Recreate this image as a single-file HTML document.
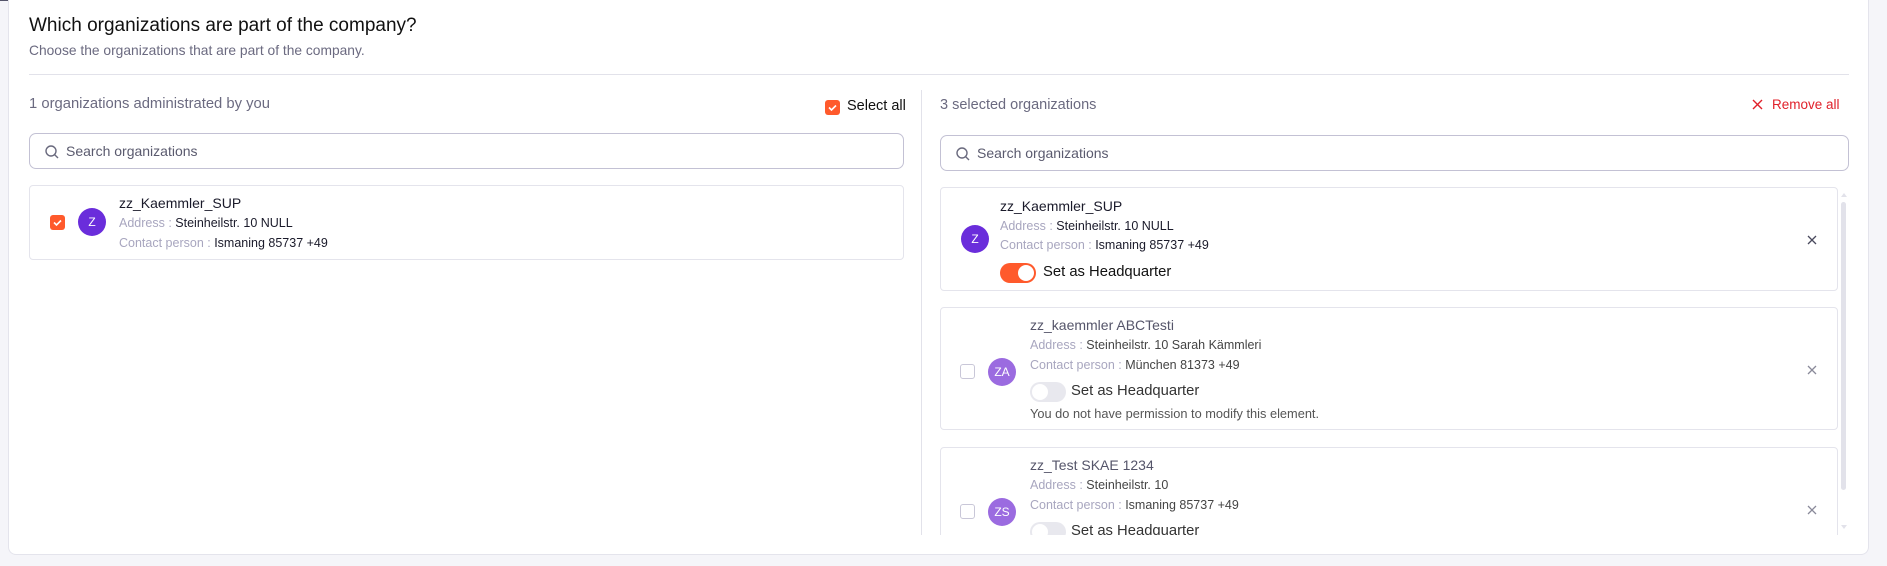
<!DOCTYPE html>
<html><head><meta charset="utf-8"><style>
*{box-sizing:border-box;margin:0;padding:0}
body{width:1887px;height:566px;background:#f5f5f9;font-family:"Liberation Sans",sans-serif;position:relative;overflow:hidden;color:#1a1a2a}
.a{position:absolute;white-space:nowrap}
.card{position:absolute;left:8px;top:0;width:1861px;height:555px;background:#fff;border:1px solid #e4e4ec;border-top:none;border-radius:0 0 8px 8px}
.search{position:absolute;border:1px solid #c3c1d4;border-radius:7px;height:36px}
.search span{position:absolute;left:36px;top:9px;font-size:14px;color:#5a5a6e}
.search svg{position:absolute;left:14px;top:10px}
.item{position:absolute;border:1px solid #e4e4ec;border-radius:4px;background:#fff}
.av{position:absolute;width:28px;height:28px;border-radius:50%;color:#fff;font-size:12px;text-align:center;line-height:28px}
.nm{font-size:14px;line-height:16px}
.ln{line-height:15px}
.lb{font-size:12.5px;color:#a8a6bf}
.vl{font-size:12.5px;color:#1a1a2a}
.cb{position:absolute;width:15px;height:15px;border-radius:3px}
.cbon{background:#ff5a2c}
.cboff{border:1px solid #c9c7d8;background:#fff}
.tg{position:absolute;width:36px;height:20px;border-radius:10px}
.tg i{position:absolute;top:2px;width:16px;height:16px;border-radius:50%;background:#fff}
.hq{font-size:14.8px;line-height:17px}
</style></head><body>
<div class="a" style="left:0;top:0;width:100px;height:1px;background:#55556a"></div>
<div class="card"></div>
<div class="a" style="left:29px;top:15px;font-size:19px;color:#111">Which organizations are part of the company?</div>
<div class="a" style="left:29px;top:43px;font-size:13.8px;color:#6b6a80">Choose the organizations that are part of the company.</div>
<div class="a" style="left:29px;top:74px;width:1820px;height:1px;background:#e2e2ea"></div>

<div class="a" style="left:29px;top:96px;font-size:14.8px;color:#6b6a80">1 organizations administrated by you</div>
<div class="cb cbon" style="left:825px;top:100px"><svg width="15" height="15"><path d="M4 7.5l2.5 2.5 4.5-4.5" stroke="#fff" stroke-width="1.6" fill="none"/></svg></div>
<div class="a" style="left:847px;top:98px;font-size:14.5px;color:#111">Select all</div>
<div class="search" style="left:29px;top:133px;width:875px"><svg width="16" height="16"><circle cx="7" cy="7" r="5" stroke="#6a6a7e" stroke-width="1.4" fill="none"/><path d="M10.6 10.6l3.4 3.4" stroke="#6a6a7e" stroke-width="1.4"/></svg><span>Search organizations</span></div>
<div class="item" style="left:29px;top:185px;width:875px;height:75px">
<div class="cb cbon" style="left:20px;top:29px"><svg width="15" height="15"><path d="M4 7.5l2.5 2.5 4.5-4.5" stroke="#fff" stroke-width="1.6" fill="none"/></svg></div>
<div class="av" style="left:48px;top:22px;background:#6a2ddb">Z</div>
<div class="a nm" style="left:89px;top:9px">zz_Kaemmler_SUP</div>
<div class="a ln" style="left:89px;top:29px"><span class="lb">Address : </span><span class="vl">Steinheilstr. 10 NULL</span></div>
<div class="a ln" style="left:89px;top:49px"><span class="lb">Contact person : </span><span class="vl">Ismaning 85737 +49</span></div>
</div>

<div class="a" style="left:921px;top:90px;width:1px;height:445px;background:#e2e2ea"></div>
<div class="a" style="left:940px;top:97px;font-size:14.5px;color:#6b6a80">3 selected organizations</div>
<svg class="a" style="left:1752px;top:99px" width="11" height="11"><path d="M1 1l9 9M10 1l-9 9" stroke="#e0202a" stroke-width="1.4"/></svg>
<div class="a" style="left:1772px;top:97px;font-size:13.5px;color:#e0202a">Remove all</div>
<div class="search" style="left:940px;top:135px;width:909px"><svg width="16" height="16"><circle cx="7" cy="7" r="5" stroke="#6a6a7e" stroke-width="1.4" fill="none"/><path d="M10.6 10.6l3.4 3.4" stroke="#6a6a7e" stroke-width="1.4"/></svg><span>Search organizations</span></div>

<div class="a" style="left:940px;top:185px;width:910px;height:350px;overflow:hidden">
<div class="item" style="left:0;top:2px;width:898px;height:104px">
<div class="av" style="left:20px;top:37px;background:#6a2ddb">Z</div>
<div class="a nm" style="left:59px;top:10px">zz_Kaemmler_SUP</div>
<div class="a ln" style="left:59px;top:30px"><span class="lb">Address : </span><span class="vl">Steinheilstr. 10 NULL</span></div>
<div class="a ln" style="left:59px;top:49px"><span class="lb">Contact person : </span><span class="vl">Ismaning 85737 +49</span></div>
<div class="tg" style="left:59px;top:75px;background:#ff5a2c"><i style="left:18px"></i></div>
<div class="a hq" style="left:102px;top:76px;color:#111">Set as Headquarter</div>
<svg class="a" style="left:866px;top:47px" width="10" height="10"><path d="M1 1l8 8M9 1l-8 8" stroke="#4a4a5e" stroke-width="1.3"/></svg>
</div>
<div class="item" style="left:0;top:122px;width:898px;height:123px">
<div class="cb cboff" style="left:19px;top:56px"></div>
<div class="av" style="left:47px;top:50px;background:#9b6be0">ZA</div>
<div class="a nm" style="left:89px;top:9px;color:#55556a">zz_kaemmler ABCTesti</div>
<div class="a ln" style="left:89px;top:29px"><span class="lb">Address : </span><span class="vl" style="color:#444">Steinheilstr. 10 Sarah Kämmleri</span></div>
<div class="a ln" style="left:89px;top:49px"><span class="lb">Contact person : </span><span class="vl" style="color:#444">München 81373 +49</span></div>
<div class="tg" style="left:89px;top:74px;background:#e8e8ee"><i style="left:2px"></i></div>
<div class="a hq" style="left:130px;top:75px;color:#333">Set as Headquarter</div>
<div class="a" style="left:89px;top:98px;font-size:12.8px;color:#555">You do not have permission to modify this element.</div>
<svg class="a" style="left:866px;top:57px" width="10" height="10"><path d="M1 1l8 8M9 1l-8 8" stroke="#8a8a9a" stroke-width="1.3"/></svg>
</div>
<div class="item" style="left:0;top:262px;width:898px;height:120px">
<div class="cb cboff" style="left:19px;top:56px"></div>
<div class="av" style="left:47px;top:50px;background:#9b6be0">ZS</div>
<div class="a nm" style="left:89px;top:9px;color:#55556a">zz_Test SKAE 1234</div>
<div class="a ln" style="left:89px;top:29px"><span class="lb">Address : </span><span class="vl" style="color:#444">Steinheilstr. 10</span></div>
<div class="a ln" style="left:89px;top:49px"><span class="lb">Contact person : </span><span class="vl" style="color:#444">Ismaning 85737 +49</span></div>
<div class="tg" style="left:89px;top:74px;background:#e8e8ee"><i style="left:2px"></i></div>
<div class="a hq" style="left:130px;top:75px;color:#333">Set as Headquarter</div>
<svg class="a" style="left:866px;top:57px" width="10" height="10"><path d="M1 1l8 8M9 1l-8 8" stroke="#8a8a9a" stroke-width="1.3"/></svg>
</div>
</div>
<div class="a" style="left:1841px;top:202px;width:5px;height:288px;border-radius:3px;background:#e2e2ea"></div>
<div class="a" style="left:1841px;top:193px;width:0;height:0;border-left:3px solid transparent;border-right:3px solid transparent;border-bottom:4px solid #e2e2ea"></div>
<div class="a" style="left:1841px;top:525px;width:0;height:0;border-left:3px solid transparent;border-right:3px solid transparent;border-top:4px solid #e2e2ea"></div>
</body></html>
